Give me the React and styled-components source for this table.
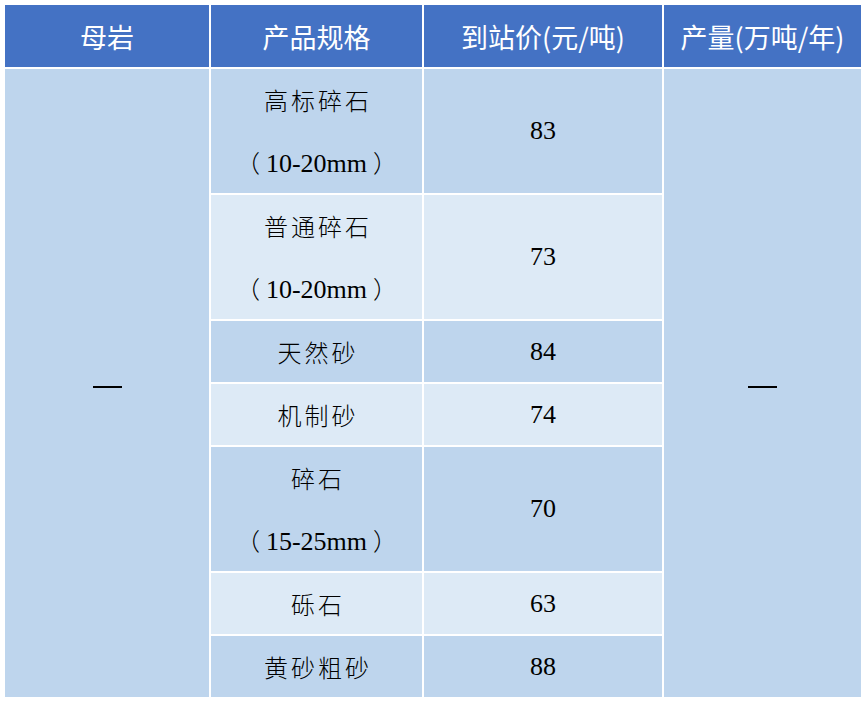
import React from "react"
import styled, { createGlobalStyle } from "styled-components"

const rows = [
  { spec: "高标碎石", size: "10-20mm", price: "83" },
  { spec: "普通碎石", size: "10-20mm", price: "73" },
  { spec: "天然砂", price: "84" },
  { spec: "机制砂", price: "74" },
  { spec: "碎石", size: "15-25mm", price: "70" },
  { spec: "砾石", price: "63" },
  { spec: "黄砂粗砂", price: "88" },
]

const colors = {
  header: "#4472c4",
  dark: "#bed5ed",
  light: "#ddeaf6",
}

const Global = createGlobalStyle`
  body {
    margin: 0;
    background: #ffffff;
  }
`

const s = {
  Table: styled.div`
    display: grid;
    grid-template-columns: 204px 211px 238px 197px;
    grid-template-rows: 62px ${rows.map((r) => (r.size ? "124px" : "61px")).join(" ")};
    gap: 2px;
    margin: 5px 0 0 5px;
    width: max-content;
    background: #ffffff;
  `,
  HeadCell: styled.div`
    display: flex;
    align-items: center;
    justify-content: center;
    background: ${colors.header};
    color: #ffffff;
    font-family: "Noto Sans CJK SC", "Noto Sans", sans-serif;
    font-size: 27px;
  `,
  Cell: styled.div`
    display: flex;
    flex-direction: column;
    align-items: center;
    justify-content: center;
    background: ${(p) => (p.$light ? colors.light : colors.dark)};
    color: #000000;
    font-family: "Liberation Serif", "Noto Sans CJK SC", serif;
    font-size: 26px;
    grid-row: ${(p) => (p.$span ? `span ${p.$span}` : "auto")};
  `,
  Line: styled.div`
    height: 62px;
    line-height: 62px;
    white-space: nowrap;
  `,
  Han: styled.span`
    font-family: "Noto Sans CJK SC", sans-serif;
    font-size: 24px;
    font-weight: 300;
    letter-spacing: 3px;
    margin-right: -3px;
  `,
  Paren: styled.span`
    font-family: "Noto Sans CJK SC", sans-serif;
    font-size: 24px;
    font-weight: 300;
    margin: ${(p) => (p.$close ? "0 0 0 6px" : "0 6px 0 0")};
  `,
  Dash: styled.span`
    display: block;
    width: 29px;
    height: 2px;
    margin-top: 8px;
    background: #000000;
  `,
}

const App = () => {
  const body = []
  rows.forEach((r, i) => {
    const light = i % 2 === 1
    if (i === 0) {
      body.push(
        <s.Cell key="rock" $span={rows.length}>
          <s.Dash />
        </s.Cell>
      )
    }
    body.push(
      <s.Cell key={`spec-${i}`} $light={light}>
        <s.Line>
          <s.Han>{r.spec}</s.Han>
        </s.Line>
        {r.size && (
          <s.Line>
            <s.Paren>（</s.Paren>
            {r.size}
            <s.Paren $close>）</s.Paren>
          </s.Line>
        )}
      </s.Cell>
    )
    body.push(
      <s.Cell key={`price-${i}`} $light={light}>
        {r.price}
      </s.Cell>
    )
    if (i === 0) {
      body.push(
        <s.Cell key="output" $span={rows.length}>
          <s.Dash />
        </s.Cell>
      )
    }
  })

  return (
    <>
      <Global />
      <s.Table>
        <s.HeadCell>母岩</s.HeadCell>
        <s.HeadCell>产品规格</s.HeadCell>
        <s.HeadCell>到站价(元/吨)</s.HeadCell>
        <s.HeadCell>产量(万吨/年)</s.HeadCell>
        {body}
      </s.Table>
    </>
  )
}

export default App
